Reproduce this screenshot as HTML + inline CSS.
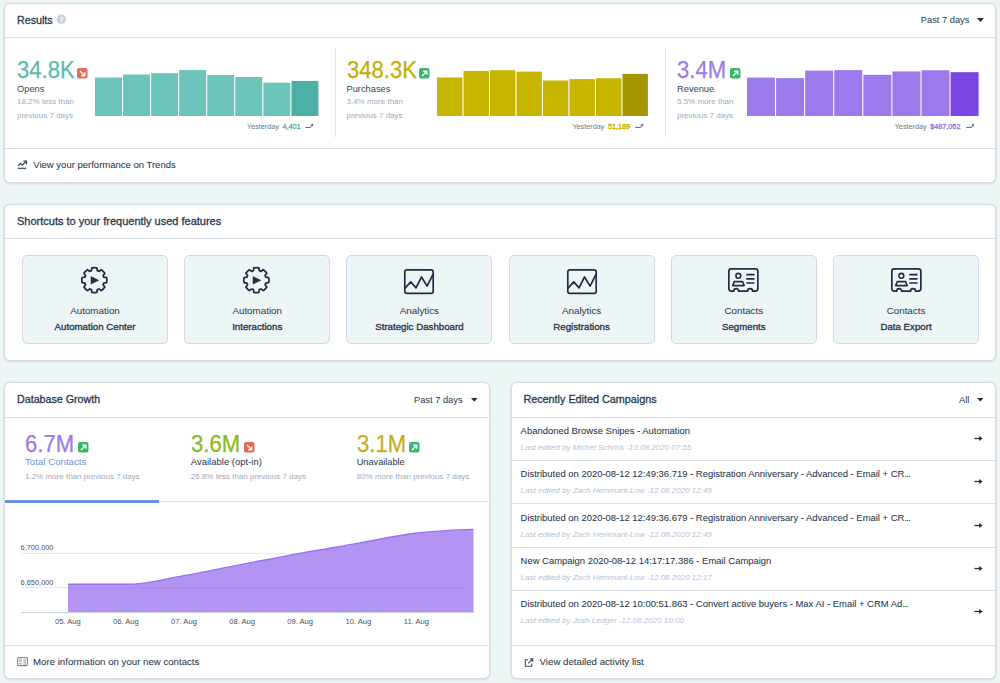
<!DOCTYPE html>
<html><head><meta charset="utf-8"><style>
html,body{margin:0;padding:0;}
body{width:1000px;height:683px;overflow:hidden;position:relative;background:#eef6f5;font-family:"Liberation Sans",sans-serif;}
.card{position:absolute;box-sizing:border-box;background:#fff;border:1px solid #d3dbe6;border-radius:6px;box-shadow:0 0 2.5px rgba(90,90,180,0.10),0 1px 2.5px rgba(40,60,70,0.10);}
.tile{position:absolute;box-sizing:border-box;background:#eef5f7;border:1px solid #d0dae6;border-radius:5px;}
.t{position:absolute;white-space:nowrap;}
svg{overflow:visible}
</style></head><body>
<div class="card" style="left:4px;top:3px;width:992px;height:180px"></div>
<svg style="position:absolute;left:56px;top:14.3px" width="11" height="11"><circle cx="5.4" cy="5.3" r="4.7" fill="#c8cde0"/><text x="5.4" y="8.2" font-family="Liberation Sans" font-size="7.5" font-weight="700" fill="#fff" text-anchor="middle">?</text></svg>
<svg style="position:absolute;left:977px;top:18px" width="7" height="4"><path d="M0 0H7L3.5 4Z" fill="#1e2b3c"/></svg>
<div style="position:absolute;left:5px;top:37px;width:990px;height:1px;background:#dbe1ea"></div>
<div style="position:absolute;left:335px;top:48px;width:1px;height:89px;background:#dfe5ee"></div>
<div style="position:absolute;left:665px;top:48px;width:1px;height:89px;background:#dfe5ee"></div>
<div style="position:absolute;left:5px;top:148px;width:990px;height:1px;background:#dbe1ea"></div>
<svg style="position:absolute;left:17px;top:159px" width="11" height="11"><path d="M1.2 6.8L3.3 4.5L5.4 6.1L8.9 2.6" fill="none" stroke="#34435a" stroke-width="1.25" stroke-linejoin="round"/><path d="M6.4 2.1H9.5V5.2" fill="none" stroke="#34435a" stroke-width="1.25"/><path d="M0.9 9.3H9.3" stroke="#34435a" stroke-width="1.2"/></svg>
<svg style="position:absolute;left:77px;top:68px" width="11" height="11"><rect x="0" y="0" width="10.5" height="10.5" rx="2" fill="#e6665a"/><path d="M3 3L7.5 7.5M4.2 7.8H7.8V4.2" fill="none" stroke="#fff" stroke-width="1.4"/></svg>
<svg style="position:absolute;left:94.5px;top:60px" width="226.5" height="60"><rect x="0.00" y="17.50" width="26.96" height="38.50" fill="#6cc4ba"/><rect x="28.06" y="14.50" width="26.96" height="41.50" fill="#6cc4ba"/><rect x="56.12" y="13.20" width="26.96" height="42.80" fill="#6cc4ba"/><rect x="84.19" y="10.10" width="26.96" height="45.90" fill="#6cc4ba"/><rect x="112.25" y="15.00" width="26.96" height="41.00" fill="#6cc4ba"/><rect x="140.31" y="17.00" width="26.96" height="39.00" fill="#6cc4ba"/><rect x="168.38" y="22.60" width="26.96" height="33.40" fill="#6cc4ba"/><rect x="196.44" y="20.90" width="26.96" height="35.10" fill="#4db0a6"/></svg>
<svg style="position:absolute;left:419px;top:68px" width="11" height="11"><rect x="0" y="0" width="10.5" height="10.5" rx="2" fill="#3bb56c"/><path d="M3 8L7.5 3.5M4.2 3.2H7.8V6.8" fill="none" stroke="#fff" stroke-width="1.4"/></svg>
<svg style="position:absolute;left:437px;top:60px" width="214" height="60"><rect x="0.00" y="17.50" width="25.40" height="38.50" fill="#c8b500"/><rect x="26.50" y="10.90" width="25.40" height="45.10" fill="#c8b500"/><rect x="53.00" y="10.20" width="25.40" height="45.80" fill="#c8b500"/><rect x="79.50" y="11.60" width="25.40" height="44.40" fill="#c8b500"/><rect x="106.00" y="20.50" width="25.40" height="35.50" fill="#c8b500"/><rect x="132.50" y="19.10" width="25.40" height="36.90" fill="#c8b500"/><rect x="159.00" y="18.20" width="25.40" height="37.80" fill="#c8b500"/><rect x="185.50" y="13.90" width="25.40" height="42.10" fill="#a69700"/></svg>
<svg style="position:absolute;left:729.5px;top:68px" width="11" height="11"><rect x="0" y="0" width="10.5" height="10.5" rx="2" fill="#3bb56c"/><path d="M3 8L7.5 3.5M4.2 3.2H7.8V6.8" fill="none" stroke="#fff" stroke-width="1.4"/></svg>
<svg style="position:absolute;left:747px;top:60px" width="234.70000000000005" height="60"><rect x="0.00" y="17.60" width="27.99" height="38.40" fill="#9c7aeb"/><rect x="29.09" y="18.10" width="27.99" height="37.90" fill="#9c7aeb"/><rect x="58.17" y="10.60" width="27.99" height="45.40" fill="#9c7aeb"/><rect x="87.26" y="10.10" width="27.99" height="45.90" fill="#9c7aeb"/><rect x="116.35" y="14.80" width="27.99" height="41.20" fill="#9c7aeb"/><rect x="145.44" y="11.40" width="27.99" height="44.60" fill="#9c7aeb"/><rect x="174.53" y="10.30" width="27.99" height="45.70" fill="#9c7aeb"/><rect x="203.61" y="12.20" width="27.99" height="43.80" fill="#7a45e1"/></svg>
<svg style="position:absolute;left:305px;top:123px" width="10" height="7"><path d="M0.2 4.4H5.6L6.9 2.3" fill="none" stroke="#5b6472" stroke-width="1"/><path d="M5.4 1.9L8.3 0.5L7.8 3.6Z" fill="#5b6472"/></svg>
<svg style="position:absolute;left:634.5px;top:123px" width="10" height="7"><path d="M0.2 4.4H5.6L6.9 2.3" fill="none" stroke="#5b6472" stroke-width="1"/><path d="M5.4 1.9L8.3 0.5L7.8 3.6Z" fill="#5b6472"/></svg>
<svg style="position:absolute;left:965.5px;top:123px" width="10" height="7"><path d="M0.2 4.4H5.6L6.9 2.3" fill="none" stroke="#5b6472" stroke-width="1"/><path d="M5.4 1.9L8.3 0.5L7.8 3.6Z" fill="#5b6472"/></svg>
<div class="card" style="left:4px;top:204px;width:992px;height:157px"></div>
<div style="position:absolute;left:5px;top:238px;width:990px;height:1px;background:#dbe1ea"></div>
<div class="tile" style="left:22.0px;top:255px;width:146px;height:89px"></div>
<svg style="position:absolute;left:80.1px;top:266px" width="28" height="28"><path d="M11.42 4.69 L11.86 1.85 A12.55 12.55 0 0 1 16.84 1.85 L17.28 4.69 A9.9 9.9 0 0 1 18.97 5.39 L21.28 3.69 A12.55 12.55 0 0 1 24.81 7.22 L23.11 9.53 A9.9 9.9 0 0 1 23.81 11.22 L26.65 11.66 A12.55 12.55 0 0 1 26.65 16.64 L23.81 17.08 A9.9 9.9 0 0 1 23.11 18.77 L24.81 21.08 A12.55 12.55 0 0 1 21.28 24.61 L18.97 22.91 A9.9 9.9 0 0 1 17.28 23.61 L16.84 26.45 A12.55 12.55 0 0 1 11.86 26.45 L11.42 23.61 A9.9 9.9 0 0 1 9.73 22.91 L7.42 24.61 A12.55 12.55 0 0 1 3.89 21.08 L5.59 18.77 A9.9 9.9 0 0 1 4.89 17.08 L2.05 16.64 A12.55 12.55 0 0 1 2.05 11.66 L4.89 11.22 A9.9 9.9 0 0 1 5.59 9.53 L3.89 7.22 A12.55 12.55 0 0 1 7.42 3.69 L9.73 5.39 A9.9 9.9 0 0 1 11.42 4.69Z" fill="none" stroke="#1f2e45" stroke-width="1.75" stroke-linejoin="round"/><path d="M11 10.6V18.1L18.8 14.35Z" fill="#1f2e45" stroke="#1f2e45" stroke-width="0.5" stroke-linejoin="round"/></svg>
<div class="tile" style="left:184.2px;top:255px;width:146px;height:89px"></div>
<svg style="position:absolute;left:242.3px;top:266px" width="28" height="28"><path d="M11.42 4.69 L11.86 1.85 A12.55 12.55 0 0 1 16.84 1.85 L17.28 4.69 A9.9 9.9 0 0 1 18.97 5.39 L21.28 3.69 A12.55 12.55 0 0 1 24.81 7.22 L23.11 9.53 A9.9 9.9 0 0 1 23.81 11.22 L26.65 11.66 A12.55 12.55 0 0 1 26.65 16.64 L23.81 17.08 A9.9 9.9 0 0 1 23.11 18.77 L24.81 21.08 A12.55 12.55 0 0 1 21.28 24.61 L18.97 22.91 A9.9 9.9 0 0 1 17.28 23.61 L16.84 26.45 A12.55 12.55 0 0 1 11.86 26.45 L11.42 23.61 A9.9 9.9 0 0 1 9.73 22.91 L7.42 24.61 A12.55 12.55 0 0 1 3.89 21.08 L5.59 18.77 A9.9 9.9 0 0 1 4.89 17.08 L2.05 16.64 A12.55 12.55 0 0 1 2.05 11.66 L4.89 11.22 A9.9 9.9 0 0 1 5.59 9.53 L3.89 7.22 A12.55 12.55 0 0 1 7.42 3.69 L9.73 5.39 A9.9 9.9 0 0 1 11.42 4.69Z" fill="none" stroke="#1f2e45" stroke-width="1.75" stroke-linejoin="round"/><path d="M11 10.6V18.1L18.8 14.35Z" fill="#1f2e45" stroke="#1f2e45" stroke-width="0.5" stroke-linejoin="round"/></svg>
<div class="tile" style="left:346.4px;top:255px;width:146px;height:89px"></div>
<svg style="position:absolute;left:404.3px;top:268.6px" width="31" height="26"><rect x="0.8" y="0.8" width="28.4" height="23.6" rx="2.2" fill="none" stroke="#1f2e45" stroke-width="1.7"/><path d="M0.8 19.3L6.8 12.8L12 18.9L17.5 8L23.1 17.1L29.2 5" fill="none" stroke="#1f2e45" stroke-width="1.7" stroke-linejoin="round"/></svg>
<div class="tile" style="left:508.6px;top:255px;width:146px;height:89px"></div>
<svg style="position:absolute;left:566.5px;top:268.6px" width="31" height="26"><rect x="0.8" y="0.8" width="28.4" height="23.6" rx="2.2" fill="none" stroke="#1f2e45" stroke-width="1.7"/><path d="M0.8 19.3L6.8 12.8L12 18.9L17.5 8L23.1 17.1L29.2 5" fill="none" stroke="#1f2e45" stroke-width="1.7" stroke-linejoin="round"/></svg>
<div class="tile" style="left:670.8px;top:255px;width:146px;height:89px"></div>
<svg style="position:absolute;left:728.4px;top:267.5px" width="31" height="25"><path d="M0.85 3.2A2.4 2.4 0 0 1 3.2 0.85H27.5A2.4 2.4 0 0 1 29.85 3.2V20.7A2.4 2.4 0 0 1 27.5 23.05H24.6A2.5 2.5 0 0 0 19.6 23.05H10.7A2.5 2.5 0 0 0 5.7 23.05H3.2A2.4 2.4 0 0 1 0.85 20.7Z" fill="none" stroke="#1f2e45" stroke-width="1.7"/><circle cx="10.35" cy="7.8" r="2.4" fill="none" stroke="#1f2e45" stroke-width="1.6"/><path d="M6.3 13.6H14.6L16.2 17.6H4.7Z" fill="none" stroke="#1f2e45" stroke-width="1.6" stroke-linejoin="round"/><path d="M18.3 6.6H26.5M18.3 10.8H26.5M18.3 15H26.5" stroke="#1f2e45" stroke-width="1.7"/></svg>
<div class="tile" style="left:833.0px;top:255px;width:146px;height:89px"></div>
<svg style="position:absolute;left:890.6px;top:267.5px" width="31" height="25"><path d="M0.85 3.2A2.4 2.4 0 0 1 3.2 0.85H27.5A2.4 2.4 0 0 1 29.85 3.2V20.7A2.4 2.4 0 0 1 27.5 23.05H24.6A2.5 2.5 0 0 0 19.6 23.05H10.7A2.5 2.5 0 0 0 5.7 23.05H3.2A2.4 2.4 0 0 1 0.85 20.7Z" fill="none" stroke="#1f2e45" stroke-width="1.7"/><circle cx="10.35" cy="7.8" r="2.4" fill="none" stroke="#1f2e45" stroke-width="1.6"/><path d="M6.3 13.6H14.6L16.2 17.6H4.7Z" fill="none" stroke="#1f2e45" stroke-width="1.6" stroke-linejoin="round"/><path d="M18.3 6.6H26.5M18.3 10.8H26.5M18.3 15H26.5" stroke="#1f2e45" stroke-width="1.7"/></svg>
<div class="card" style="left:4px;top:382px;width:486px;height:297px"></div>
<svg style="position:absolute;left:471px;top:397.5px" width="6.5" height="3.8"><path d="M0 0H6.5L3.25 3.8Z" fill="#1e2b3c"/></svg>
<div style="position:absolute;left:5px;top:417px;width:484px;height:1px;background:#dbe1ea"></div>
<svg style="position:absolute;left:78px;top:441.5px" width="11" height="11"><rect x="0" y="0" width="10.5" height="10.5" rx="2" fill="#3bb56c"/><path d="M3 8L7.5 3.5M4.2 3.2H7.8V6.8" fill="none" stroke="#fff" stroke-width="1.4"/></svg>
<svg style="position:absolute;left:243.5px;top:441.5px" width="11" height="11"><rect x="0" y="0" width="10.5" height="10.5" rx="2" fill="#e6665a"/><path d="M3 3L7.5 7.5M4.2 7.8H7.8V4.2" fill="none" stroke="#fff" stroke-width="1.4"/></svg>
<svg style="position:absolute;left:409.2px;top:441.5px" width="11" height="11"><rect x="0" y="0" width="10.5" height="10.5" rx="2" fill="#3bb56c"/><path d="M3 8L7.5 3.5M4.2 3.2H7.8V6.8" fill="none" stroke="#fff" stroke-width="1.4"/></svg>
<div style="position:absolute;left:5px;top:501px;width:484px;height:1px;background:#d9dfe9"></div>
<div style="position:absolute;left:5px;top:500px;width:154px;height:2.6px;background:#6a8ee2"></div>
<div style="position:absolute;left:20.6px;top:553px;width:447.4px;height:1px;background:#e6e9ef"></div>
<div style="position:absolute;left:20.6px;top:587px;width:447.4px;height:1px;background:#e6e9ef"></div>
<svg style="position:absolute;left:0;top:0" width="500" height="683"><path d="M68.00 584.30 C68.00 584.30 102.76 584.30 125.93 584.30 C149.10 584.30 160.69 579.58 183.86 575.60 C207.03 571.62 218.62 568.84 241.79 564.40 C264.96 559.96 276.55 557.60 299.72 553.40 C322.89 549.20 334.48 547.44 357.65 543.40 C380.82 539.36 392.41 536.00 415.58 533.20 C438.75 530.40 473.51 529.40 473.51 529.40 L473.51 612 L68 612Z" fill="#b394f3"/><path d="M68.00 584.30 C68.00 584.30 102.76 584.30 125.93 584.30 C149.10 584.30 160.69 579.58 183.86 575.60 C207.03 571.62 218.62 568.84 241.79 564.40 C264.96 559.96 276.55 557.60 299.72 553.40 C322.89 549.20 334.48 547.44 357.65 543.40 C380.82 539.36 392.41 536.00 415.58 533.20 C438.75 530.40 473.51 529.40 473.51 529.40" fill="none" stroke="#9b70ee" stroke-width="1.4"/><path d="M68 588H468" stroke="#a57ff0" stroke-width="1" opacity="0.5"/></svg>
<div style="position:absolute;left:20.6px;top:611.5px;width:453.4px;height:1px;background:#cfd5de"></div>
<div style="position:absolute;left:5px;top:645px;width:484px;height:1px;background:#dbe1ea"></div>
<svg style="position:absolute;left:17px;top:657px" width="11" height="10"><rect x="0.6" y="0.6" width="9.8" height="8" rx="1" fill="none" stroke="#7f8c9d" stroke-width="1.1"/><circle cx="3.5" cy="3.6" r="1.1" fill="none" stroke="#7f8c9d" stroke-width="0.9"/><path d="M2 6.8H5M6.3 3H9M6.3 5H9M6.3 7H9" stroke="#7f8c9d" stroke-width="0.9"/></svg>
<div class="card" style="left:511px;top:382px;width:485px;height:297px"></div>
<svg style="position:absolute;left:977.2px;top:397.7px" width="6.6" height="3.6"><path d="M0 0H6.6L3.3 3.6Z" fill="#1e2b3c"/></svg>
<div style="position:absolute;left:512px;top:417px;width:483px;height:1px;background:#dbe1ea"></div>
<div style="position:absolute;left:512px;top:460px;width:483px;height:1px;background:#dbe1ea"></div>
<svg style="position:absolute;left:974px;top:434.8px" width="10" height="7"><path d="M0.5 3.5H7" stroke="#1e2b3c" stroke-width="1.3"/><path d="M5.2 1L8.6 3.5L5.2 6Z" fill="#1e2b3c"/></svg>
<div style="position:absolute;left:512px;top:503px;width:483px;height:1px;background:#dbe1ea"></div>
<svg style="position:absolute;left:974px;top:477.8px" width="10" height="7"><path d="M0.5 3.5H7" stroke="#1e2b3c" stroke-width="1.3"/><path d="M5.2 1L8.6 3.5L5.2 6Z" fill="#1e2b3c"/></svg>
<div style="position:absolute;left:512px;top:547px;width:483px;height:1px;background:#dbe1ea"></div>
<svg style="position:absolute;left:974px;top:521.8px" width="10" height="7"><path d="M0.5 3.5H7" stroke="#1e2b3c" stroke-width="1.3"/><path d="M5.2 1L8.6 3.5L5.2 6Z" fill="#1e2b3c"/></svg>
<div style="position:absolute;left:512px;top:590px;width:483px;height:1px;background:#dbe1ea"></div>
<svg style="position:absolute;left:974px;top:564.8px" width="10" height="7"><path d="M0.5 3.5H7" stroke="#1e2b3c" stroke-width="1.3"/><path d="M5.2 1L8.6 3.5L5.2 6Z" fill="#1e2b3c"/></svg>
<div style="position:absolute;left:512px;top:645px;width:483px;height:1px;background:#dbe1ea"></div>
<svg style="position:absolute;left:974px;top:607.8px" width="10" height="7"><path d="M0.5 3.5H7" stroke="#1e2b3c" stroke-width="1.3"/><path d="M5.2 1L8.6 3.5L5.2 6Z" fill="#1e2b3c"/></svg>
<svg style="position:absolute;left:523.5px;top:657.5px" width="10" height="10"><path d="M4 1.8H1.3V8.3H7.8V5.6" fill="none" stroke="#3d4c62" stroke-width="1.1"/><path d="M4.3 5.3L8.6 1M5.8 0.8H8.8V3.8" fill="none" stroke="#3d4c62" stroke-width="1.1"/></svg>
<div class="t" style="left:17px;top:15px;font-size:10.7px;line-height:10.7px;color:#2a384b;font-weight:400;font-style:normal;-webkit-text-stroke:0.3px currentColor;">Results</div>
<div class="t" style="left:920.8px;top:16px;font-size:9.3px;line-height:9.3px;color:#2a384b;font-weight:400;font-style:normal;">Past 7 days</div>
<div class="t" style="left:33.3px;top:160px;font-size:9.5px;line-height:9.5px;color:#2a384b;font-weight:400;font-style:normal;-webkit-text-stroke:0.06px currentColor;">View your performance on Trends</div>
<div class="t" style="left:17px;top:59px;font-size:23px;line-height:23px;color:#5cbab0;font-weight:400;font-style:normal;-webkit-text-stroke:0.25px currentColor;transform:scaleX(0.96);transform-origin:0 0;">34.8K</div>
<div class="t" style="left:17px;top:85px;font-size:9.3px;line-height:9.3px;color:#34455c;font-weight:400;font-style:normal;">Opens</div>
<div class="t" style="left:17px;top:98px;font-size:8px;line-height:8px;color:#9daabd;font-weight:400;font-style:normal;">18.2% less than</div>
<div class="t" style="left:17px;top:112px;font-size:8px;line-height:8px;color:#9daabd;font-weight:400;font-style:normal;">previous 7 days</div>
<div class="t" style="left:247px;top:123px;font-size:7.25px;line-height:7.25px;color:#6f7780;font-weight:400;font-style:normal;">Yesterday <span style="color:#5cbab0;margin-left:1.5px;-webkit-text-stroke:0.35px #5cbab0">4,401</span></div>
<div class="t" style="left:346.5px;top:59px;font-size:23px;line-height:23px;color:#c2ae00;font-weight:400;font-style:normal;-webkit-text-stroke:0.25px currentColor;transform:scaleX(0.96);transform-origin:0 0;">348.3K</div>
<div class="t" style="left:346.5px;top:85px;font-size:9.3px;line-height:9.3px;color:#34455c;font-weight:400;font-style:normal;">Purchases</div>
<div class="t" style="left:346.5px;top:98px;font-size:8px;line-height:8px;color:#9daabd;font-weight:400;font-style:normal;">3.4% more than</div>
<div class="t" style="left:346.5px;top:112px;font-size:8px;line-height:8px;color:#9daabd;font-weight:400;font-style:normal;">previous 7 days</div>
<div class="t" style="left:572.4px;top:123px;font-size:7.25px;line-height:7.25px;color:#6f7780;font-weight:400;font-style:normal;">Yesterday <span style="color:#c2ae00;margin-left:1.5px;-webkit-text-stroke:0.35px #c2ae00">51,189</span></div>
<div class="t" style="left:677px;top:59px;font-size:23px;line-height:23px;color:#9b7be8;font-weight:400;font-style:normal;-webkit-text-stroke:0.25px currentColor;transform:scaleX(0.96);transform-origin:0 0;">3.4M</div>
<div class="t" style="left:677px;top:85px;font-size:9.3px;line-height:9.3px;color:#34455c;font-weight:400;font-style:normal;">Revenue</div>
<div class="t" style="left:677px;top:98px;font-size:8px;line-height:8px;color:#9daabd;font-weight:400;font-style:normal;">5.5% more than</div>
<div class="t" style="left:677px;top:112px;font-size:8px;line-height:8px;color:#9daabd;font-weight:400;font-style:normal;">previous 7 days</div>
<div class="t" style="left:894.7px;top:123px;font-size:7.25px;line-height:7.25px;color:#6f7780;font-weight:400;font-style:normal;">Yesterday <span style="color:#9b7be8;margin-left:1.5px;-webkit-text-stroke:0.35px #9b7be8">$487,062</span></div>
<div class="t" style="left:17px;top:216px;font-size:11px;line-height:11px;color:#2a384b;font-weight:400;font-style:normal;-webkit-text-stroke:0.3px currentColor;">Shortcuts to your frequently used features</div>
<div class="t" style="left:95.0px;top:306px;font-size:9.8px;line-height:9.8px;color:#34424f;font-weight:400;font-style:normal;transform:translateX(-50%);-webkit-text-stroke:0.06px currentColor;">Automation</div>
<div class="t" style="left:95.0px;top:322px;font-size:9.7px;line-height:9.7px;color:#22324a;font-weight:400;font-style:normal;transform:translateX(-50%);-webkit-text-stroke:0.3px currentColor;">Automation Center</div>
<div class="t" style="left:257.2px;top:306px;font-size:9.8px;line-height:9.8px;color:#34424f;font-weight:400;font-style:normal;transform:translateX(-50%);-webkit-text-stroke:0.06px currentColor;">Automation</div>
<div class="t" style="left:257.2px;top:322px;font-size:9.7px;line-height:9.7px;color:#22324a;font-weight:400;font-style:normal;transform:translateX(-50%);-webkit-text-stroke:0.3px currentColor;">Interactions</div>
<div class="t" style="left:419.4px;top:306px;font-size:9.8px;line-height:9.8px;color:#34424f;font-weight:400;font-style:normal;transform:translateX(-50%);-webkit-text-stroke:0.06px currentColor;">Analytics</div>
<div class="t" style="left:419.4px;top:322px;font-size:9.7px;line-height:9.7px;color:#22324a;font-weight:400;font-style:normal;transform:translateX(-50%);-webkit-text-stroke:0.3px currentColor;">Strategic Dashboard</div>
<div class="t" style="left:581.5999999999999px;top:306px;font-size:9.8px;line-height:9.8px;color:#34424f;font-weight:400;font-style:normal;transform:translateX(-50%);-webkit-text-stroke:0.06px currentColor;">Analytics</div>
<div class="t" style="left:581.5999999999999px;top:322px;font-size:9.7px;line-height:9.7px;color:#22324a;font-weight:400;font-style:normal;transform:translateX(-50%);-webkit-text-stroke:0.3px currentColor;">Registrations</div>
<div class="t" style="left:743.8px;top:306px;font-size:9.8px;line-height:9.8px;color:#34424f;font-weight:400;font-style:normal;transform:translateX(-50%);-webkit-text-stroke:0.06px currentColor;">Contacts</div>
<div class="t" style="left:743.8px;top:322px;font-size:9.7px;line-height:9.7px;color:#22324a;font-weight:400;font-style:normal;transform:translateX(-50%);-webkit-text-stroke:0.3px currentColor;">Segments</div>
<div class="t" style="left:906.0px;top:306px;font-size:9.8px;line-height:9.8px;color:#34424f;font-weight:400;font-style:normal;transform:translateX(-50%);-webkit-text-stroke:0.06px currentColor;">Contacts</div>
<div class="t" style="left:906.0px;top:322px;font-size:9.7px;line-height:9.7px;color:#22324a;font-weight:400;font-style:normal;transform:translateX(-50%);-webkit-text-stroke:0.3px currentColor;">Data Export</div>
<div class="t" style="left:17px;top:394px;font-size:10.7px;line-height:10.7px;color:#2a384b;font-weight:400;font-style:normal;-webkit-text-stroke:0.3px currentColor;">Database Growth</div>
<div class="t" style="left:414px;top:396px;font-size:9.3px;line-height:9.3px;color:#2a384b;font-weight:400;font-style:normal;">Past 7 days</div>
<div class="t" style="left:25px;top:433px;font-size:23px;line-height:23px;color:#9b7be8;font-weight:400;font-style:normal;-webkit-text-stroke:0.25px currentColor;transform:scaleX(0.96);transform-origin:0 0;">6.7M</div>
<div class="t" style="left:25px;top:457px;font-size:9.7px;line-height:9.7px;color:#7491e6;font-weight:400;font-style:normal;">Total Contacts</div>
<div class="t" style="left:25px;top:473px;font-size:8px;line-height:8px;color:#9daabd;font-weight:400;font-style:normal;">1.2% more than previous 7 days</div>
<div class="t" style="left:190.8px;top:433px;font-size:23px;line-height:23px;color:#89b828;font-weight:400;font-style:normal;-webkit-text-stroke:0.25px currentColor;transform:scaleX(0.96);transform-origin:0 0;">3.6M</div>
<div class="t" style="left:190.8px;top:457px;font-size:9.5px;line-height:9.5px;color:#2a3446;font-weight:400;font-style:normal;">Available (opt-in)</div>
<div class="t" style="left:190.8px;top:473px;font-size:8px;line-height:8px;color:#9daabd;font-weight:400;font-style:normal;">26.8% less than previous 7 days</div>
<div class="t" style="left:356.7px;top:433px;font-size:23px;line-height:23px;color:#c5ad18;font-weight:400;font-style:normal;-webkit-text-stroke:0.25px currentColor;transform:scaleX(0.96);transform-origin:0 0;">3.1M</div>
<div class="t" style="left:356.7px;top:458px;font-size:9.2px;line-height:9.2px;color:#2a3446;font-weight:400;font-style:normal;">Unavailable</div>
<div class="t" style="left:356.7px;top:473px;font-size:8px;line-height:8px;color:#9daabd;font-weight:400;font-style:normal;">80% more than previous 7 days</div>
<div class="t" style="left:20.6px;top:544px;font-size:7.4px;line-height:7.4px;color:#4a5160;font-weight:400;font-style:normal;">6,700,000</div>
<div class="t" style="left:20.6px;top:579px;font-size:7.4px;line-height:7.4px;color:#4a5160;font-weight:400;font-style:normal;">6,650,000</div>
<div class="t" style="left:67.8px;top:618px;font-size:7.6px;line-height:7.6px;color:#4a5160;font-weight:400;font-style:normal;transform:translateX(-50%);">05. Aug</div>
<div class="t" style="left:125.9px;top:618px;font-size:7.6px;line-height:7.6px;color:#4a5160;font-weight:400;font-style:normal;transform:translateX(-50%);">06. Aug</div>
<div class="t" style="left:184.0px;top:618px;font-size:7.6px;line-height:7.6px;color:#4a5160;font-weight:400;font-style:normal;transform:translateX(-50%);">07. Aug</div>
<div class="t" style="left:242.10000000000002px;top:618px;font-size:7.6px;line-height:7.6px;color:#4a5160;font-weight:400;font-style:normal;transform:translateX(-50%);">08. Aug</div>
<div class="t" style="left:300.2px;top:618px;font-size:7.6px;line-height:7.6px;color:#4a5160;font-weight:400;font-style:normal;transform:translateX(-50%);">09. Aug</div>
<div class="t" style="left:358.3px;top:618px;font-size:7.6px;line-height:7.6px;color:#4a5160;font-weight:400;font-style:normal;transform:translateX(-50%);">10. Aug</div>
<div class="t" style="left:416.40000000000003px;top:618px;font-size:7.6px;line-height:7.6px;color:#4a5160;font-weight:400;font-style:normal;transform:translateX(-50%);">11. Aug</div>
<div class="t" style="left:33px;top:657px;font-size:9.67px;line-height:9.67px;color:#2a384b;font-weight:400;font-style:normal;-webkit-text-stroke:0.06px currentColor;">More information on your new contacts</div>
<div class="t" style="left:523.4px;top:394px;font-size:10.8px;line-height:10.8px;color:#2a384b;font-weight:400;font-style:normal;-webkit-text-stroke:0.3px currentColor;">Recently Edited Campaigns</div>
<div class="t" style="left:959px;top:396px;font-size:9.3px;line-height:9.3px;color:#2a384b;font-weight:400;font-style:normal;">All</div>
<div class="t" style="left:520.6px;top:426px;font-size:9.45px;line-height:9.45px;color:#27354a;font-weight:400;font-style:normal;-webkit-text-stroke:0.06px currentColor;">Abandoned Browse Snipes - Automation</div>
<div class="t" style="left:520.6px;top:444px;font-size:8px;line-height:8px;color:#b5bfd0;font-weight:400;font-style:italic;">Last edited by Michel Schrick -13.08.2020 07:55</div>
<div class="t" style="left:520.6px;top:469px;font-size:9.45px;line-height:9.45px;color:#27354a;font-weight:400;font-style:normal;-webkit-text-stroke:0.06px currentColor;">Distributed on 2020-08-12 12:49:36.719 - Registration Anniversary - Advanced - Email + CR<span style="letter-spacing:-0.7px">...</span></div>
<div class="t" style="left:520.6px;top:487px;font-size:8px;line-height:8px;color:#b5bfd0;font-weight:400;font-style:italic;">Last edited by Zach Hemmant-Low -12.08.2020 12:49</div>
<div class="t" style="left:520.6px;top:513px;font-size:9.45px;line-height:9.45px;color:#27354a;font-weight:400;font-style:normal;-webkit-text-stroke:0.06px currentColor;">Distributed on 2020-08-12 12:49:36.679 - Registration Anniversary - Advanced - Email + CR<span style="letter-spacing:-0.7px">...</span></div>
<div class="t" style="left:520.6px;top:531px;font-size:8px;line-height:8px;color:#b5bfd0;font-weight:400;font-style:italic;">Last edited by Zach Hemmant-Low -12.08.2020 12:49</div>
<div class="t" style="left:520.6px;top:556px;font-size:9.45px;line-height:9.45px;color:#27354a;font-weight:400;font-style:normal;-webkit-text-stroke:0.06px currentColor;">New Campaign 2020-08-12 14:17:17.386 - Email Campaign</div>
<div class="t" style="left:520.6px;top:574px;font-size:8px;line-height:8px;color:#b5bfd0;font-weight:400;font-style:italic;">Last edited by Zach Hemmant-Low -12.08.2020 12:17</div>
<div class="t" style="left:520.6px;top:599px;font-size:9.45px;line-height:9.45px;color:#27354a;font-weight:400;font-style:normal;-webkit-text-stroke:0.06px currentColor;">Distributed on 2020-08-12 10:00:51.863 - Convert active buyers - Max AI - Email + CRM Ad<span style="letter-spacing:-0.7px">...</span></div>
<div class="t" style="left:520.6px;top:617px;font-size:8px;line-height:8px;color:#b5bfd0;font-weight:400;font-style:italic;">Last edited by Josh Ledger -12.08.2020 10:00</div>
<div class="t" style="left:539.6px;top:657px;font-size:9.68px;line-height:9.68px;color:#2a384b;font-weight:400;font-style:normal;-webkit-text-stroke:0.06px currentColor;">View detailed activity list</div>
</body></html>
